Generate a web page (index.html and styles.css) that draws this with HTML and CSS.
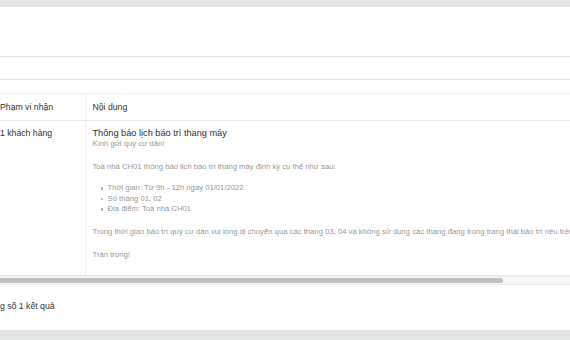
FILE: index.html
```html
<!DOCTYPE html>
<html lang="vi">
<head>
<meta charset="utf-8">
<title>Thông báo</title>
<link rel="stylesheet" href="styles.css">
</head>
<body>
<div class="page">
  <main class="card">
    <div class="card-head"></div>
    <div class="card-filter"></div>
    <div class="table-wrap">
      <table class="table">
        <thead>
          <tr>
            <th class="col-scope">Phạm vi nhận</th>
            <th class="col-content">Nội dung</th>
          </tr>
        </thead>
        <tbody>
          <tr>
            <td class="col-scope">1 khách hàng</td>
            <td class="col-content">
              <div class="msg-title">Thông báo lịch báo trì thang máy</div>
              <div class="msg-body">
                <p>Kính gửi quý cư dân!</p>
                <p class="gap-lg"><br></p>
                <p>Toà nhà CH01 thông báo lịch báo trì thang máy định kỳ cụ thể như sau:</p>
                <p><br></p>
                <ul>
                  <li>Thời gian: Từ 9h - 12h ngày 01/01/2022</li>
                  <li>Số tháng 01, 02</li>
                  <li>Địa điểm: Toà nhà CH01</li>
                </ul>
                <p><br></p>
                <p>Trong thời gian bảo trì quý cư dân vui lòng di chuyển qua các thang 03, 04 và không sử dụng các thang đang trong trạng thái bảo trì nêu trên.</p>
                <p class="gap-lg"><br></p>
                <p>Trân trọng!</p>
              </div>
            </td>
          </tr>
        </tbody>
      </table>
      <div class="scrollbar"><div class="scrollbar-thumb"></div></div>
    </div>
    <div class="card-footer">Tổng số 1 kết quả</div>
  </main>
</div>
</body>
</html>
```
FILE: styles.css
```css
* {
  box-sizing: border-box;
}

html, body {
  margin: 0;
  padding: 0;
  overflow: hidden;
}

body {
  background: #e4e5e5;
  font-family: "Liberation Sans", Arial, sans-serif;
  color: #333;
  width: 570px;
  height: 340px;
}

.page {
  padding-top: 7px;
}

.card {
  background: #fff;
  height: 323px;
  overflow: hidden;
}

.card-head {
  height: 50px;
  border-bottom: 1px solid #e3e3e3;
}

.card-filter {
  height: 23px;
  border-bottom: 1px solid #e3e3e3;
  margin-bottom: 13px;
}

.table-wrap {
  margin-left: -8px;
  width: 900px;
}

.table {
  border-collapse: collapse;
  table-layout: fixed;
  width: 900px;
  font-size: 8.7px;
}

.table th,
.table td {
  padding: 7px 7px;
  text-align: left;
  vertical-align: top;
  line-height: 12px;
  white-space: nowrap;
}

.table th {
  font-weight: normal;
  color: #333;
  border-top: 1px solid #eeeeee;
  border-bottom: 1px solid #ebebeb;
}

.table td {
  border-bottom: 1px solid #ebebeb;
  color: #333;
}

.col-scope {
  width: 93px;
  padding-left: 8px !important;
  border-right: 1px solid #efefef;
}

.table td.col-scope {
  line-height: 10px;
}

.msg-title {
  font-size: 9.2px;
  line-height: 10px;
  color: #2e2e2e;
}

.msg-body {
  font-size: 7.7px;
  line-height: 11px;
  color: #999;
  padding-bottom: 8px;
}

.msg-body p {
  margin: 0;
}

.msg-body .gap-lg {
  line-height: 12px;
}

.msg-body ul {
  margin: 0;
  padding-left: 8px;
  list-style: none;
}

.msg-body li {
  display: flex;
  align-items: center;
  line-height: 10.5px;
}

.msg-body li::before {
  content: "";
  flex: none;
  width: 2.5px;
  height: 2.5px;
  border-radius: 50%;
  background: #aaa;
  margin-right: 4.5px;
}

.scrollbar {
  height: 9px;
  background: #f7f7f7;
  border-top: 1px solid #ececec;
  border-bottom: 1px solid #ececec;
  padding: 1px 0;
}

.scrollbar-thumb {
  width: 511px;
  height: 5px;
  background: #c1c1c1;
  border-radius: 3px;
}

.card-footer {
  margin-left: -15px;
  padding-top: 15px;
  font-size: 8.7px;
  line-height: 12px;
  color: #333;
}
```
